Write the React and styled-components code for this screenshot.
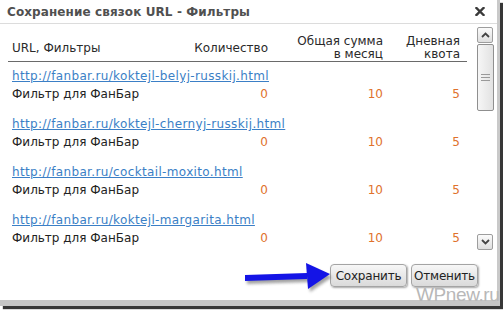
import React from "react";
import styled, { createGlobalStyle } from "styled-components";

const GlobalStyle = createGlobalStyle`
  html, body { margin: 0; padding: 0; background: #ffffff; overflow: hidden; }
  body { font-family: "DejaVu Sans", Verdana, sans-serif; }
`;

const Stage = styled.div`
  position: relative;
  width: 503px;
  height: 312px;
  background: #fff;
`;

const Window = styled.div`
  position: relative;
  width: 497px;
  height: 300px;
  background: #fff;
  border-right: 3px solid #c9c9c9;
  border-bottom: 6px solid #c6c6c6;
  box-shadow: 3px 3px 1px rgba(20, 20, 20, 0.85);
  display: flex;
  flex-direction: column;
`;

const TitleBar = styled.div`
  height: 23px;
  border-bottom: 1px solid #dcdcdc;
  display: flex;
  align-items: center;
  justify-content: space-between;
  padding: 0 12px 0 7px;
`;

const Title = styled.div`
  font-size: 12px;
  font-weight: bold;
  color: #505050;
  letter-spacing: 0.1px;
`;

const Close = styled.svg`
  width: 10px;
  height: 9px;
  margin-top: -1px;
`;

const Body = styled.div`
  height: 228px;
  display: flex;
  align-items: flex-start;
  padding-left: 8px;
  overflow: hidden;
`;

const Table = styled.div`
  width: 459px;
  font-size: 12px;
  color: #222;
`;

const Cols = styled.div`
  display: grid;
  grid-template-columns: 147px 120px 115px 77px;
  align-items: ${(p) => (p.$head ? "center" : "baseline")};
`;

const Head = styled(Cols)`
  padding: 11px 0 0;
  border-bottom: 1px solid #6a6a6a;
  line-height: 13px;
  color: #2a2a2a;
`;

const Cell = styled.div`
  padding: ${(p) => (p.$left ? "0 0 0 4px" : "0 7px 0 0")};
  text-align: ${(p) => (p.$left ? "left" : "right")};
  white-space: nowrap;
  color: ${(p) => (p.$num ? "#e0712c" : "inherit")};
`;

const Row = styled.div`
  padding: 5px 0 7px;
  line-height: 18px;
`;

const Link = styled.a`
  display: block;
  padding-left: 4px;
  color: #3b7fc6;
  text-decoration: underline;
  white-space: nowrap;
  letter-spacing: 0.35px;
`;

const Scroll = styled.div`
  margin: 3px 0 0 10px;
  width: 16px;
  height: 223px;
  display: flex;
  flex-direction: column;
`;

const ScrollBtn = styled.div`
  width: 14px;
  height: 14px;
  border: 1px solid #9d9d9d;
  border-radius: 2px;
  background: linear-gradient(#fbfbfb, #dedede);
  display: flex;
  align-items: center;
  justify-content: center;
`;

const Thumb = styled.div`
  margin-top: 1px;
  width: 15px;
  height: 65px;
  border: 1px solid #8f8f8f;
  border-radius: 2px;
  background: linear-gradient(90deg, #f6f6f6, #e2e2e2);
  display: flex;
  align-items: center;
  justify-content: center;
`;

const Track = styled.div`
  flex: 1;
`;

const Footer = styled.div`
  display: flex;
  justify-content: flex-end;
  gap: 4px;
  padding: 12px 19px 0 0;
`;

const Button = styled.button`
  width: ${(p) => p.$w}px;
  height: 23px;
  padding: 0;
  font-family: "DejaVu Sans", Verdana, sans-serif;
  font-size: 12px;
  letter-spacing: -0.2px;
  color: #222;
  border: 1px solid #a4a4a4;
  border-radius: 4px;
  background: linear-gradient(#f7f7f7, #dadada);
  box-shadow: 1px 1px 2px rgba(0, 0, 0, 0.35);
  white-space: nowrap;
`;

const Watermark = styled.div`
  position: absolute;
  left: 416px;
  top: 284px;
  font-family: "Liberation Sans", Arial, sans-serif;
  font-size: 19px;
  color: #b8b8b8;
  letter-spacing: -0.4px;
`;

const Arrow = styled.svg`
  position: absolute;
  left: 240px;
  top: 255px;
  width: 95px;
  height: 42px;
`;

const rows = [
  "http://fanbar.ru/koktejl-belyj-russkij.html",
  "http://fanbar.ru/koktejl-chernyj-russkij.html",
  "http://fanbar.ru/cocktail-moxito.html",
  "http://fanbar.ru/koktejl-margarita.html",
];

export default function App() {
  return (
    <>
      <GlobalStyle />
      <Stage>
        <Window>
          <TitleBar>
            <Title>Сохранение связок URL - Фильтры</Title>
            <Close viewBox="0 0 10 9">
              <path d="M1.5 1 L8.5 8 M8.5 1 L1.5 8" stroke="#3a3a3a" strokeWidth="2.4" strokeLinecap="square" />
            </Close>
          </TitleBar>
          <Body>
            <Table>
              <Head $head>
                <Cell $left>URL, Фильтры</Cell>
                <Cell>Количество</Cell>
                <Cell>Общая сумма<br />в месяц</Cell>
                <Cell>Дневная<br />квота</Cell>
              </Head>
              {rows.map((u) => (
                <Row key={u}>
                  <Link href="#">{u}</Link>
                  <Cols>
                    <Cell $left>Фильтр для ФанБар</Cell>
                    <Cell $num>0</Cell>
                    <Cell $num>10</Cell>
                    <Cell $num>5</Cell>
                  </Cols>
                </Row>
              ))}
            </Table>
            <Scroll>
              <ScrollBtn>
                <svg width="9" height="6" viewBox="0 0 9 6">
                  <path d="M1 5 L4.5 1.5 L8 5" fill="none" stroke="#444" strokeWidth="1.8" />
                </svg>
              </ScrollBtn>
              <Thumb>
                <svg width="9" height="7" viewBox="0 0 9 7">
                  <path d="M0 0.5 H9 M0 3.5 H9 M0 6.5 H9" stroke="#9a9a9a" strokeWidth="1" />
                </svg>
              </Thumb>
              <Track />
              <ScrollBtn>
                <svg width="9" height="6" viewBox="0 0 9 6">
                  <path d="M1 1 L4.5 4.5 L8 1" fill="none" stroke="#444" strokeWidth="1.8" />
                </svg>
              </ScrollBtn>
            </Scroll>
          </Body>
          <Footer>
            <Button $w={77}>Сохранить</Button>
            <Button $w={67}>Отменить</Button>
          </Footer>
        </Window>
        <Watermark>WPnew.ru</Watermark>
        <Arrow viewBox="0 0 95 42">
          <defs>
            <filter id="sh" x="-20%" y="-30%" width="140%" height="160%">
              <feGaussianBlur stdDeviation="1.6" />
            </filter>
          </defs>
          <g transform="translate(2 3)" filter="url(#sh)" fill="#7a7a7a" opacity="0.7">
            <polygon points="5,20 67,18 67,24 5,26" />
            <polygon points="66,8 68,34 90,19" />
          </g>
          <polygon points="5,20 67,18 67,24 5,26" fill="#1414e6" />
          <polygon points="66,8 68,34 90,19" fill="#1414e6" />
        </Arrow>
      </Stage>
    </>
  );
}
